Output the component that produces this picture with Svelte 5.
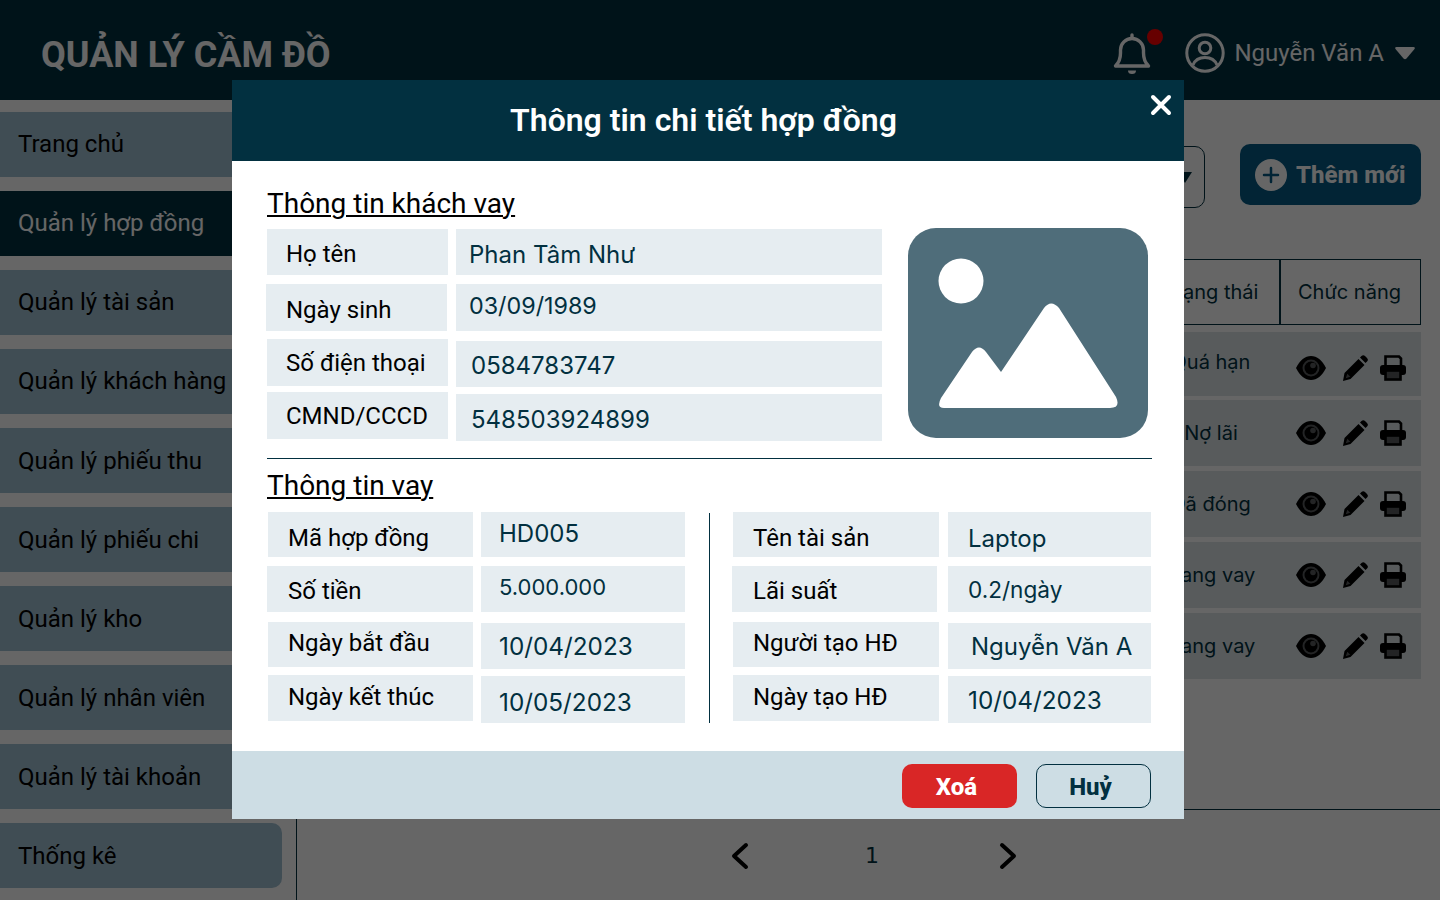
<script>
  // DATA
  const menu = [
    'Trang chủ', 'Quản lý hợp đồng', 'Quản lý tài sản', 'Quản lý khách hàng', 'Quản lý phiếu thu',
    'Quản lý phiếu chi', 'Quản lý kho', 'Quản lý nhân viên', 'Quản lý tài khoản', 'Thống kê'
  ]
  const statuses = ['Quá hạn', 'Nợ lãi', 'Đã đóng', 'Đang vay', 'Đang vay']

  const customerLabels = [
    { t: 'Họ tên', c: 'low2' }, { t: 'Ngày sinh', c: 'low4 back' },
    { t: 'Số điện thoại', c: '' }, { t: 'CMND/CCCD', c: '' }
  ]
  const customerValues = [
    { t: 'Phan Tâm Như', c: 'low2' }, { t: '03/09/1989', c: 'up2 md' },
    { t: '0584783747', c: 'low1 in2' }, { t: '548503924899', c: 'low2 in2' }
  ]
  const loanLabelsA = [
    { t: 'Mã hợp đồng', c: 'low5' }, { t: 'Số tiền', c: 'low2 back' },
    { t: 'Ngày bắt đầu', c: 'up2' }, { t: 'Ngày kết thúc', c: 'up1' }
  ]
  const loanValuesA = [
    { t: 'HD005', c: 'up1' }, { t: '5.000.000', c: 'up2 sm' },
    { t: '10/04/2023', c: 'lg' }, { t: '10/05/2023', c: 'low2 lg' }
  ]
  const loanLabelsB = [
    { t: 'Tên tài sản', c: 'low5' }, { t: 'Lãi suất', c: 'low2 back narrow' },
    { t: 'Người tạo HĐ', c: 'up2' }, { t: 'Ngày tạo HĐ', c: 'up1' }
  ]
  const loanValuesB = [
    { t: 'Laptop', c: 'low5' }, { t: '0.2/ngày', c: 'sm2' },
    { t: 'Nguyễn Văn A', c: 'in3' }, { t: '10/04/2023', c: 'lg' }
  ]
</script>

{#snippet column(cells, kind, pad)}
  <div class="col {kind} {pad}">
    {#each cells as cell}
      <div class="cell {cell.c}">{cell.t}</div>
    {/each}
  </div>
{/snippet}

<div class="page">
  <header class="topbar">
    <h1>QUẢN LÝ CẦM ĐỒ</h1>
    <div class="topbar_right">
      <div class="bell">
        <svg width="38" height="42" viewBox="0 0 38 42" fill="none" stroke="#fff" stroke-width="3.400" stroke-linejoin="round" stroke-linecap="round">
          <path d="M19 3v3" />
          <path d="M2.500 34c3-3 5-7 5-13v-3a11.500 11.500 0 0 1 23 0v3c0 6 2 10 5 13z" />
          <path d="M15 38.500h8a4 3.500 0 0 1-8 0z" fill="#fff" stroke="none" />
        </svg>
        <span class="dot"></span>
      </div>
      <svg class="avatar" width="40" height="40" viewBox="0 0 40 40" fill="none" stroke="#fff" stroke-width="3">
        <circle cx="20" cy="20" r="18.200" />
        <circle cx="20" cy="15" r="5.800" />
        <path d="M8 32c2-5 7-7.500 12-7.500s10 2.500 12 7.500" />
      </svg>
      <span class="username">Nguyễn Văn A</span>
      <svg width="20" height="13" viewBox="0 0 20 13"><path d="M1.500 0h17q2 0 1 2l-8 9.500q-1.500 1.500-3 0L.5 2q-1-2 1-2z" fill="#fff" /></svg>
    </div>
  </header>

  <div class="content">
    <aside class="sidebar">
      {#each menu as item, i}
        <div class="side_item" class:active={i === 1}>{item}</div>
      {/each}
    </aside>

    <main class="main">
      <div class="toolbar">
        <div class="filter">
          <svg width="14" height="11" viewBox="0 0 14 11"><path d="M0 0h14L7 11z" fill="#023040" /></svg>
        </div>
        <button class="add_btn">
          <svg width="32" height="32" viewBox="0 0 32 32">
            <circle cx="16" cy="16" r="16" fill="#fff" />
            <path d="M16 9v14M9 16h14" stroke="#055a84" stroke-width="2.500" stroke-linecap="round" />
          </svg>
          Thêm mới
        </button>
      </div>

      <div class="table">
        <div class="thead">
          <div></div>
          <div class="th">Trạng thái</div>
          <div class="th">Chức năng</div>
        </div>
        {#each statuses as status}
          <div class="row">
            <div></div>
            <div class="status">{status}</div>
            <div class="actions">
              <svg class="eye" width="30" height="24" viewBox="0 0 30 24">
                <path d="M0 12C4 4 9 0 15 0s11 4 15 12c-4 8-9 12-15 12S4 20 0 12z" fill="#000" />
                <circle cx="15" cy="12" r="8.500" fill="#585b5c" />
                <circle cx="15" cy="12" r="6.500" fill="#000" />
                <circle cx="17" cy="9.500" r="2.800" fill="#585b5c" />
              </svg>
              <svg width="25" height="26" viewBox="0 0 25 26">
                <path d="M1.500 18L15.500 4l6 6L7.500 24 0 26z" fill="#000" />
                <path d="M2.800 23.200l1.500-4.500 3 3z" fill="#585b5c" />
                <path d="M17 2.500l1.500-1.500a2.500 2.500 0 0 1 3.500 0l2 2a2.500 2.500 0 0 1 0 3.500L22.500 8z" fill="#000" />
              </svg>
              <svg class="printer" width="26" height="26" viewBox="0 0 26 26">
                <path d="M5.500 11V1.500h13.500l2 2V11" fill="none" stroke="#000" stroke-width="2.600" />
                <rect x="0" y="10" width="26" height="10" rx="3" fill="#000" />
                <rect x="5.500" y="15.500" width="15" height="9" fill="#585b5c" stroke="#000" stroke-width="2.600" />
              </svg>
            </div>
          </div>
        {/each}
      </div>

      <div class="pager">
        <svg width="18" height="28" viewBox="0 0 18 28" fill="none" stroke="#000" stroke-width="4" stroke-linecap="round" stroke-linejoin="round"><path d="M15 3L3 14l12 11" /></svg>
        <span>1</span>
        <svg width="18" height="28" viewBox="0 0 18 28" fill="none" stroke="#000" stroke-width="4" stroke-linecap="round" stroke-linejoin="round"><path d="M3 3l12 11L3 25" /></svg>
      </div>
    </main>
  </div>

  <div class="scrim"></div>

  <section class="modal">
    <div class="modal_head">
      <h2>Thông tin chi tiết hợp đồng</h2>
      <svg class="close" width="22" height="22" viewBox="0 0 22 22" stroke="#fff" stroke-width="4" stroke-linecap="round"><path d="M3 3l16 16M19 3L3 19" /></svg>
    </div>

    <div class="modal_body">
      <h3>Thông tin khách vay</h3>
      <div class="customer">
        {@render column(customerLabels, 'label g1 lbl', 'w181')}
        {@render column(customerValues, 'value g2', 'w426')}
        <svg class="photo" width="240" height="210" viewBox="0 0 240 210">
          <rect width="240" height="210" rx="28" fill="#4f6d7a" />
          <circle cx="53" cy="53" r="22.500" fill="#fff" />
          <path d="M39 180H36Q28 180 33 170L64 124Q71 115 78 124L93 144L136 80Q143 71 151 80L208 169Q213 180 202 180Z" fill="#fff" />
        </svg>
      </div>

      <hr />

      <h3 class="second">Thông tin vay</h3>
      <div class="loan">
        <div class="loan_side">
          {@render column(loanLabelsA, 'label g3 lbl2', 'w205')}
          {@render column(loanValuesA, 'value g4 pad18', 'w204')}
        </div>
        <div class="vline"></div>
        <div class="loan_side">
          {@render column(loanLabelsB, 'label g3 lbl2', 'w206')}
          {@render column(loanValuesB, 'value g4 pad20', 'w203')}
        </div>
      </div>
    </div>

    <div class="modal_foot">
      <button class="btn danger">Xoá</button>
      <button class="btn ghost">Huỷ</button>
    </div>
  </section>
</div>

<style>
  :global(body) {
    margin: 0;
    font-family: Roboto, "Liberation Sans", sans-serif;
  }

  .page {
    position: relative;
    width: 1440px;
    height: 900px;
    overflow: hidden;
    background: #fff;
  }

  .scrim {
    position: absolute;
    inset: 0;
    background: rgba(0, 0, 0, 0.6);
  }

  /* TOPBAR */
  .topbar {
    height: 100px;
    background: #023040;
    display: flex;
    align-items: center;
    justify-content: space-between;
    padding: 0 25px 0 41px;
    color: #fff;
  }

  h1 {
    margin: 10px 0 0;
    font-size: 36px;
    font-weight: 700;
    line-height: 1;
  }

  .topbar_right {
    display: flex;
    align-items: center;
    padding-top: 6px;
  }

  .bell {
    position: relative;
    height: 42px;
    margin-right: 34px;
  }

  .dot {
    position: absolute;
    left: 34px;
    top: -3px;
    width: 16px;
    height: 16px;
    border-radius: 50%;
    background: #ff0000;
  }

  .username {
    margin: 0 11px 0 9px;
    font-size: 24px;
  }

  /* SIDEBAR */
  .content {
    display: flex;
    height: 800px;
  }

  .sidebar {
    width: 296px;
    flex: none;
    padding-top: 12px;
    display: flex;
    flex-direction: column;
    gap: 14px;
    border-right: 1px solid #023040;
  }

  .side_item {
    width: 264px;
    height: 65px;
    padding-left: 18px;
    display: flex;
    align-items: center;
    background: #a0c0d2;
    border-radius: 0 10px 10px 0;
    font-size: 24px;
    color: #000;
  }

  .side_item:nth-child(-n+4) {
    padding-bottom: 2px;
    height: 63px;
  }

  .side_item.active {
    background: #023040;
    color: #fff;
  }

  /* MAIN */
  .main {
    flex: 1;
    display: flex;
    flex-direction: column;
    min-width: 0;
  }

  .toolbar {
    display: flex;
    justify-content: flex-end;
    align-items: flex-start;
    gap: 35px;
    padding: 44px 19px 0 0;
  }

  .filter {
    width: 140px;
    height: 60px;
    margin-top: 2px;
    border: 1px solid #023040;
    border-radius: 10px;
    display: flex;
    align-items: center;
    justify-content: flex-end;
    padding-right: 12px;
  }

  .add_btn {
    width: 181px;
    height: 61px;
    border: 0;
    border-radius: 10px;
    background: #055a84;
    color: #fff;
    font-family: Roboto, sans-serif;
    font-size: 24px;
    font-weight: 800;
    display: flex;
    align-items: center;
    gap: 9px;
    padding: 0 0 0 15px;
  }

  .table {
    flex: 1;
    margin: 51px 19px 0 20px;
    font-family: Inter, sans-serif;
    font-size: 20px;
    color: #023040;
  }

  .thead,
  .row {
    display: grid;
    grid-template-columns: 1fr 130px 141px;
  }

  .thead {
    height: 66px;
    box-sizing: border-box;
    border: 1px solid #023040;
  }

  .th {
    display: flex;
    align-items: center;
    justify-content: center;
    border-left: 2px solid #023040;
  }

  .th:nth-child(2) {
    padding-right: 8px;
  }

  .th:last-child {
    padding-right: 2px;
  }

  .row {
    height: 66px;
    margin-top: 5px;
    background: #dbe4e7;
    align-items: center;
  }

  .thead + .row {
    margin-top: 7px;
    height: 64px;
  }

  .thead + .row + .row {
    margin-top: 4px;
  }

  .status {
    text-align: center;
    padding: 0 8px 0 0;
  }

  .thead + .row .status {
    padding-bottom: 4px;
  }

  .actions {
    display: flex;
    align-items: center;
    gap: 17px;
    padding-left: 16px;
  }

  .thead + .row .actions {
    padding-top: 8px;
  }

  .printer {
    margin-left: -5px;
  }

  .pager {
    height: 90px;
    border-top: 1px solid #023040;
    display: flex;
    align-items: center;
    justify-content: center;
    gap: 118px;
    padding-left: 11px;
    font-family: "DejaVu Sans", sans-serif;
    font-size: 22px;
    color: #023040;
  }

  .pager span {
    margin: 0 2px 0 -2px;
  }

  .pager svg {
    margin-top: 2px;
  }

  /* MODAL */
  .modal {
    position: absolute;
    left: 232px;
    top: 80px;
    width: 952px;
    height: 739px;
    background: #fff;
    display: flex;
    flex-direction: column;
  }

  .modal_head {
    position: relative;
    height: 81px;
    flex: none;
    background: #023040;
    display: flex;
    align-items: center;
    justify-content: center;
    color: #fff;
  }

  .modal_head h2 {
    margin: 0 9px 2px 0;
    font-size: 32px;
    font-weight: 600;
  }

  .close {
    position: absolute;
    right: 12px;
    top: 14px;
  }

  .modal_body {
    flex: 1;
    padding: 26px 32px 0 35px;
  }

  h3 {
    margin: 0;
    font-size: 28px;
    font-weight: 400;
    line-height: 34px;
    color: #000;
    text-decoration: underline;
    text-underline-offset: 2px;
    text-decoration-thickness: 2px;
  }

  .customer {
    display: flex;
    margin-top: 8px;
    position: relative;
  }

  .loan {
    display: flex;
    margin-top: 9px;
    margin-left: 1px;
  }

  .loan_side {
    display: flex;
  }

  .col {
    display: flex;
    flex-direction: column;
    flex: none;
  }

  .cell {
    display: flex;
    align-items: center;
    box-sizing: border-box;
    background: #e6edf1;
  }

  .label .cell {
    color: #000;
    font-size: 24px;
  }

  .value .cell {
    color: #023040;
    font-family: Inter, sans-serif;
    font-size: 24px;
  }

  .lbl .cell { padding-left: 19px; }
  .lbl .back { padding-left: 20px; width: 181px; }
  .lbl2 .cell { padding-left: 20px; }
  .lbl2 .back { padding-left: 21px; width: 206px; }
  .lbl2 .narrow { width: 205px; }
  .w181 { width: 181px; margin-right: 8px; }
  .w426 { width: 426px; margin-right: 26px; }
  .w205 { width: 205px; margin-right: 8px; }
  .w204 { width: 204px; }
  .w206 { width: 206px; margin-right: 9px; }
  .w203 { width: 203px; }

  .g2 .cell { padding-left: 13px; }
  .pad18 .cell { padding-left: 18px; }
  .pad20 .cell { padding-left: 20px; }
  .g2 .in2 { padding-left: 15px; }
  .pad20 .in3 { padding-left: 23px; }

  .value .md { font-size: 23.300px; }
  .value .lg { font-size: 24.300px; }
  .value .sm { font-size: 22px; }
  .value .sm2 { font-size: 22.600px; }

  .low1 { padding-top: 2px; }
  .low2 { padding-top: 4px; }
  .low4 { padding-top: 5px; }
  .low5 { padding-top: 7px; }
  .up1 { padding-bottom: 2px; }
  .up2 { padding-bottom: 4px; }
  .back { margin-left: -1px; }

  /* the rows of the source design are not perfectly even */
  .g1 .cell { height: 47px; }
  .g1 .cell:nth-child(1) { height: 46px; }
  .g1 .cell:nth-child(2) { margin-top: 9px; }
  .g1 .cell:nth-child(3) { margin-top: 8px; }
  .g1 .cell:nth-child(4) { margin-top: 6px; }

  .g2 .cell { height: 46px; }
  .g2 .cell:nth-child(2) { margin-top: 9px; height: 47px; }
  .g2 .cell:nth-child(3) { margin-top: 10px; }
  .g2 .cell:nth-child(4) { margin-top: 7px; height: 47px; }

  .g3 .cell { height: 45px; }
  .g3 .cell:nth-child(2) { margin-top: 9px; height: 46px; }
  .g3 .cell:nth-child(3) { margin-top: 10px; }
  .g3 .cell:nth-child(4) { margin-top: 8px; height: 46px; }

  .g4 .cell { height: 46px; }
  .g4 .cell:nth-child(1) { height: 45px; }
  .g4 .cell:nth-child(2) { margin-top: 9px; }
  .g4 .cell:nth-child(3) { margin-top: 11px; }
  .g4 .cell:nth-child(4) { margin-top: 7px; height: 47px; }

  .photo {
    flex: none;
    margin-top: -1px;
  }

  hr {
    height: 1px;
    margin: 17px 0 0;
    border: 0;
    background: #023040;
  }

  h3.second {
    margin-top: 10px;
  }

  .vline {
    width: 1px;
    flex: none;
    margin: 1px 23px 0 24px;
    background: #023040;
  }

  .modal_foot {
    height: 68px;
    box-sizing: border-box;
    flex: none;
    background: #cddde4;
    display: flex;
    align-items: center;
    justify-content: flex-end;
    gap: 19px;
    padding: 2px 33px 0 0;
  }

  .btn {
    width: 115px;
    height: 44px;
    border-radius: 10px;
    font-family: Roboto, sans-serif;
    font-size: 24px;
    font-weight: 800;
    padding: 2px 6px 0 0;
  }

  .danger {
    border: 0;
    background: #d92626;
    color: #fff;
  }

  .ghost {
    border: 1px solid #023040;
    background: transparent;
    color: #023040;
  }
</style>
